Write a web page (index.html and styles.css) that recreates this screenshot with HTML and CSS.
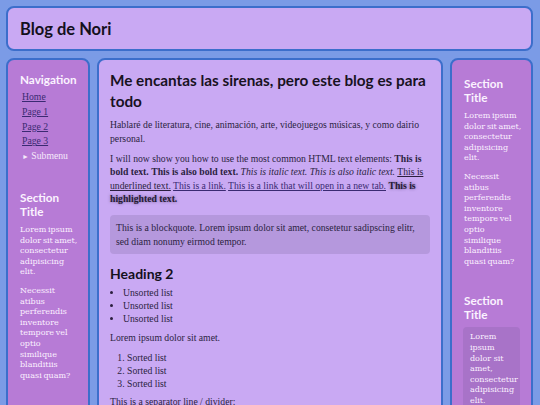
FILE: index.html
```html
<!DOCTYPE html>
<html lang="es">
<head>
<meta charset="utf-8">
<title>Blog de Nori</title>
<link rel="stylesheet" href="styles.css">
</head>
<body>
<header class="site-header">
  <h1 class="site-title">Blog de Nori</h1>
</header>
<div class="layout">
  <aside class="sidebar">
    <h2 class="side-title">Navigation</h2>
    <ul class="nav">
      <li><a href="#">Home</a></li>
      <li><a href="#">Page 1</a></li>
      <li><a href="#">Page 2</a></li>
      <li><a href="#">Page 3</a></li>
      <li class="submenu"><span class="tri">&#9658;</span> Submenu</li>
    </ul>
    <h2 class="side-title section">Section Title</h2>
    <p class="side-text">Lorem ipsum dolor sit amet, consectetur adipisicing elit.</p>
    <p class="side-text">Necessit atibus perferendis inventore tempore vel optio similique blanditiis quasi quam?</p>
  </aside>
  <main class="content">
    <h1 class="post-title">Me encantas las sirenas, pero este blog es para todo</h1>
    <p>Hablaré de literatura, cine, animación, arte, videojuegos músicas, y como dairio personal.</p>
    <p>I will now show you how to use the most common HTML text elements: <strong>This is bold text.</strong> <b>This is also bold text.</b> <em>This is italic text.</em> <i>This is also italic text.</i> <u>This is underlined text.</u> <a href="#">This is a link.</a> <a href="#">This is a link that will open in a new tab.</a> <mark>This is highlighted text.</mark></p>
    <blockquote class="quote">This is a blockquote. Lorem ipsum dolor sit amet, consetetur sadipscing elitr, sed diam nonumy eirmod tempor.</blockquote>
    <h2 class="post-h2">Heading 2</h2>
    <ul class="list">
      <li>Unsorted list</li>
      <li>Unsorted list</li>
      <li>Unsorted list</li>
    </ul>
    <p>Lorem ipsum dolor sit amet.</p>
    <ol class="list olist">
      <li>Sorted list</li>
      <li>Sorted list</li>
      <li>Sorted list</li>
    </ol>
    <p>This is a separator line / divider:</p>
  </main>
  <aside class="sidebar right">
    <h2 class="side-title">Section Title</h2>
    <p class="side-text">Lorem ipsum dolor sit amet, consectetur adipisicing elit.</p>
    <p class="side-text">Necessit atibus perferendis inventore tempore vel optio similique blanditiis quasi quam?</p>
    <h2 class="side-title section2">Section Title</h2>
    <div class="side-box">Lorem ipsum dolor sit amet, consectetur adipisicing elit.</div>
  </aside>
</div>
</body>
</html>
```
FILE: styles.css
```css
* { box-sizing: border-box; }
html, body { height: 100%; }
body {
  margin: 0;
  padding: 6px 7px 0 6px;
  background: #7b9be6;
  font-family: "Liberation Serif", serif;
  font-size: 9.7px;
  color: #2b1f3f;
  overflow: hidden;
}
.site-header {
  height: 45px;
  background: #c9a9f3;
  border: 2px solid #3c6ecb;
  border-radius: 8px;
  display: flex;
  align-items: center;
  padding: 0 12px;
}
.site-title {
  margin: 0;
  font-family: "Lato", sans-serif;
  font-weight: 700;
  font-size: 16.5px;
  color: #14101c;
}
.layout {
  display: grid;
  grid-template-columns: 84px 1fr 83px;
  gap: 7px;
  margin-top: 7px;
  height: 400px;
}
.sidebar {
  background: #b77bd6;
  border: 2px solid #3c6ecb;
  border-radius: 8px;
  padding: 12px 9.2px 12px 12px;
  color: #f6e9fb;
}
.side-title {
  margin: 0;
  font-family: "Lato", sans-serif;
  font-weight: 700;
  font-size: 11.7px;
  line-height: 14px;
  color: #fbf3ff;
}
.nav {
  list-style: none;
  margin: 4px 0 0 2px;
  padding: 0;
}
.nav li {
  line-height: 14.8px;
}
.nav a {
  color: #3a2a72;
  text-decoration: underline;
}
.submenu { color: #f6e9fb; }
.tri { font-size: 7px; }
.section { margin-top: 25px; }
.side-text {
  margin: 7px 0 0;
  font-family: "DejaVu Serif", serif;
  font-size: 8px;
  line-height: 10.6px;
  word-spacing: -0.8px;
  color: #fbf0ff;
}
.side-text + .side-text { margin-top: 8px; }
.right { padding-top: 16px; padding-right: 8.2px; }
.section2 { margin-top: 26px; }
.side-box {
  margin: 6px 0 0 -1px;
  width: 57px;
  background: #a873c8;
  border-radius: 4px;
  padding: 5px 7px;
  font-family: "DejaVu Serif", serif;
  font-size: 8px;
  line-height: 10.6px;
  color: #fbf0ff;
}
.content {
  background: #c9a9f3;
  border: 2px solid #3c6ecb;
  border-radius: 8px;
  padding: 10px 11px;
  line-height: 13.5px;
}
.post-title {
  margin: 0 0 6px;
  font-family: "Lato", sans-serif;
  font-weight: 700;
  font-size: 15.3px;
  line-height: 21px;
  color: #18121f;
}
.content p { margin: 0 0 6.5px; }
.content a { color: #3a2a72; }
.content mark {
  background: none;
  color: #241a33;
  font-weight: 700;
  text-shadow: 0 0 3px rgba(40, 20, 70, 0.55);
}
.quote {
  margin: 9.5px 0 10px;
  background: #b598dd;
  border-radius: 4px;
  padding: 6px 6px;
  line-height: 13.5px;
}
.post-h2 {
  margin: 0 0 2px;
  font-family: "Lato", sans-serif;
  font-weight: 700;
  font-size: 14px;
  line-height: 20px;
  color: #14101c;
}
.list {
  margin: 0 0 5px;
  padding-left: 13px;
}
.olist { padding-left: 17px; }
.list li { line-height: 13.2px; }
```
